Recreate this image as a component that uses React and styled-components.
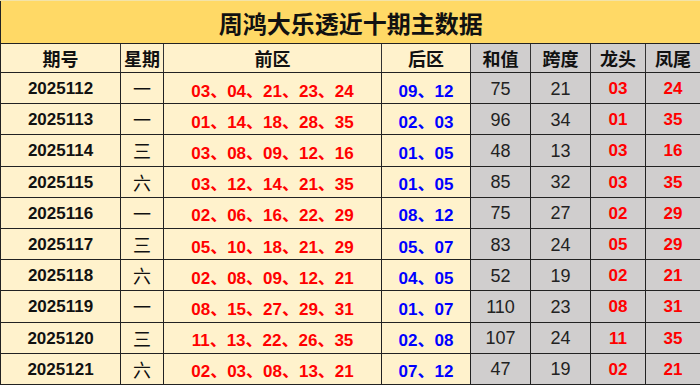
import React from "react";
import styled, { createGlobalStyle } from "styled-components";

const draws = [
  ["2025112", "一", "03、04、21、23、24", "09、12", 75, 21, "03", "24"],
  ["2025113", "一", "01、14、18、28、35", "02、03", 96, 34, "01", "35"],
  ["2025114", "三", "03、08、09、12、16", "01、05", 48, 13, "03", "16"],
  ["2025115", "六", "03、12、14、21、35", "01、05", 85, 32, "03", "35"],
  ["2025116", "一", "02、06、16、22、29", "08、12", 75, 27, "02", "29"],
  ["2025117", "三", "05、10、18、21、29", "05、07", 83, 24, "05", "29"],
  ["2025118", "六", "02、08、09、12、21", "04、05", 52, 19, "02", "21"],
  ["2025119", "一", "08、15、27、29、31", "01、07", 110, 23, "08", "31"],
  ["2025120", "三", "11、13、22、26、35", "02、08", 107, 24, "11", "35"],
  ["2025121", "六", "02、03、08、13、21", "07、12", 47, 19, "02", "21"],
];

const widths = [120, 43, 218, 89, 60, 60, 55, 55];
const headers = ["期号", "星期", "前区", "后区", "和值", "跨度", "龙头", "凤尾"];

export default function App() {
  return (
    <>
      <GlobalStyle />
      <Table>
        <colgroup>
          {widths.map((w, i) => (
            <col key={i} style={{ width: w }} />
          ))}
        </colgroup>
        <thead>
          <tr>
            <Title colSpan={8}>周鸿大乐透近十期主数据</Title>
          </tr>
          <tr>
            {headers.map((h, i) => (
              <Head key={h} gray={i >= 4}>
                {h}
              </Head>
            ))}
          </tr>
        </thead>
        <tbody>
          {draws.map((d) => (
            <Row key={d[0]}>
              <Cell>{d[0]}</Cell>
              <Weekday>{d[1]}</Weekday>
              <Cell color="#ff0000">{d[2]}</Cell>
              <Cell color="#0000ff">{d[3]}</Cell>
              <Plain>{d[4]}</Plain>
              <Plain>{d[5]}</Plain>
              <Cell gray color="#ff0000">{d[6]}</Cell>
              <Cell gray color="#ff0000">{d[7]}</Cell>
            </Row>
          ))}
        </tbody>
      </Table>
    </>
  );
}

const GlobalStyle = createGlobalStyle`
  body {
    margin: 0;
    background: #ffffff;
  }
`;

const Table = styled.table`
  width: 700px;
  table-layout: fixed;
  border-collapse: collapse;
  font-family: "Liberation Sans", "Noto Sans CJK SC", sans-serif;
  color: #111;
`;

const Title = styled.th`
  height: 42px;
  padding: 0;
  background: #ffd966;
  border-left: 1px solid #222;
  border-bottom: 1px solid #222;
  border-top: 1px solid #f3e3a8;
  font-family: "Noto Sans CJK SC", sans-serif;
  font-size: 24px;
  font-weight: 700;
  letter-spacing: 0;
  text-align: center;
  color: #111;
`;

const Head = styled.th`
  height: 28px;
  padding: 0;
  background: ${({ gray }) => (gray ? "#d0cece" : "#fff2cc")};
  border: 1px solid #222;
  border-right-color: ${({ gray }) => (gray ? "#333" : "#333")};
  font-family: "Noto Sans CJK SC", sans-serif;
  font-size: 18px;
  font-weight: 700;
  text-align: center;
  line-height: 1;
`;

const Row = styled.tr`
  height: 31.2px;
`;

const Cell = styled.td`
  padding: 2px 0 0;
  background: ${({ gray }) => (gray ? "#d0cece" : "#fff2cc")};
  border: 1px solid #222;
  color: ${({ color }) => color || "#111"};
  font-size: 17px;
  font-weight: 700;
  text-align: center;
  white-space: nowrap;
`;

const Weekday = styled(Cell)`
  font-family: "Noto Sans CJK SC", sans-serif;
  font-weight: 400;
  font-size: 18px;
  padding-top: 0;
`;

const Plain = styled(Cell)`
  background: #d0cece;
  font-weight: 400;
  font-size: 18px;
  color: #222;
`;
